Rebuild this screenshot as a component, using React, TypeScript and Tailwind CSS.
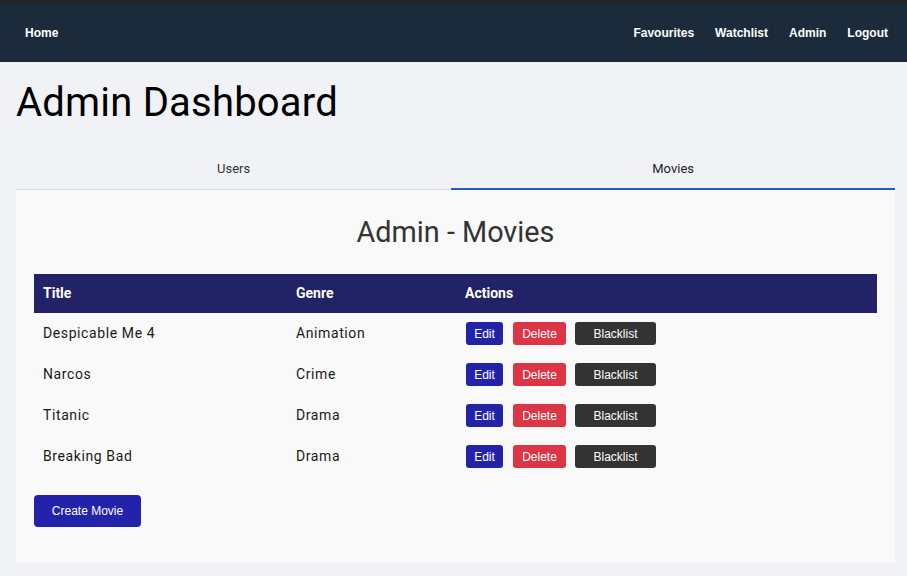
import React from "react";

const movies = [
  { title: "Despicable Me 4", genre: "Animation" },
  { title: "Narcos", genre: "Crime" },
  { title: "Titanic", genre: "Drama" },
  { title: "Breaking Bad", genre: "Drama" },
];

export default function App() {
  return (
    <div className="min-h-[576px] bg-[#f0f2f5]" style={{ fontFamily: "Roboto, sans-serif" }}>
      <div className="h-[4px] bg-[#222629]" />
      <nav
        className="flex h-[58px] items-center justify-between bg-[#1c2b3c] pl-[25px] pr-[19px] text-[12px] font-bold text-white"
        style={{ fontFamily: '"Liberation Sans", Arial, sans-serif' }}
      >
        <span>Home</span>
        <div className="flex gap-[21px]">
          <span>Favourites</span>
          <span>Watchlist</span>
          <span>Admin</span>
          <span>Logout</span>
        </div>
      </nav>
      <main className="pb-[13px] pl-4 pr-[12px]">
        <h1 className="mt-[17px] text-[40px] leading-[48px] tracking-[0.2px] text-black">Admin Dashboard</h1>
        <div className="mt-[19px] flex text-[13px] text-[#333]">
          <div className="flex h-[44px] flex-auto items-center justify-center border-b border-[#d8dee8] pt-[2px]">Users</div>
          <div className="flex h-[44px] flex-auto items-center justify-center border-b-2 border-[#2160b8] pt-[4px] text-[#1e2230]">Movies</div>
        </div>
        <section className="bg-[#f9f9f9] px-[18px] pb-[36px] pt-[25px]">
          <h2 className="text-center text-[28.8px] leading-[34px] text-[#333]">Admin - Movies</h2>
          <table className="mt-[25px] w-full border-collapse text-left">
            <thead>
              <tr className="h-[39px] bg-[#222266] text-[14px] font-bold text-white">
                <th className="w-[253px] pl-[9px] font-bold">Title</th>
                <th className="w-[169px] pl-[9px] font-bold">Genre</th>
                <th className="pl-[9px] font-bold">Actions</th>
              </tr>
            </thead>
            <tbody>
              {movies.map((m) => (
                <tr key={m.title} className="h-[41px] text-[14px] tracking-[0.6px] text-[#1a1a1a]">
                  <td className="pl-[9px]">{m.title}</td>
                  <td className="pl-[9px]">{m.genre}</td>
                  <td className="pl-[10px]">
                    <div
                      className="flex items-center text-[12px] tracking-normal text-white"
                      style={{ fontFamily: '"Liberation Sans", Arial, sans-serif' }}
                    >
                      <span className="flex h-[23px] w-[37px] items-center justify-center rounded-[3px] bg-[#2323a8]">Edit</span>
                      <span className="ml-[10px] flex h-[23px] w-[53px] items-center justify-center rounded-[3px] bg-[#dc3545]">Delete</span>
                      <span className="ml-[9px] flex h-[23px] w-[81px] items-center justify-center rounded-[3px] bg-[#333333]">Blacklist</span>
                    </div>
                  </td>
                </tr>
              ))}
            </tbody>
          </table>
          <button
            className="mt-[18px] flex h-[32px] w-[107px] items-center justify-center rounded-[4px] bg-[#2222aa] text-[12px] text-white"
            style={{ fontFamily: '"Liberation Sans", Arial, sans-serif' }}
          >
            Create Movie
          </button>
        </section>
      </main>
    </div>
  );
}
